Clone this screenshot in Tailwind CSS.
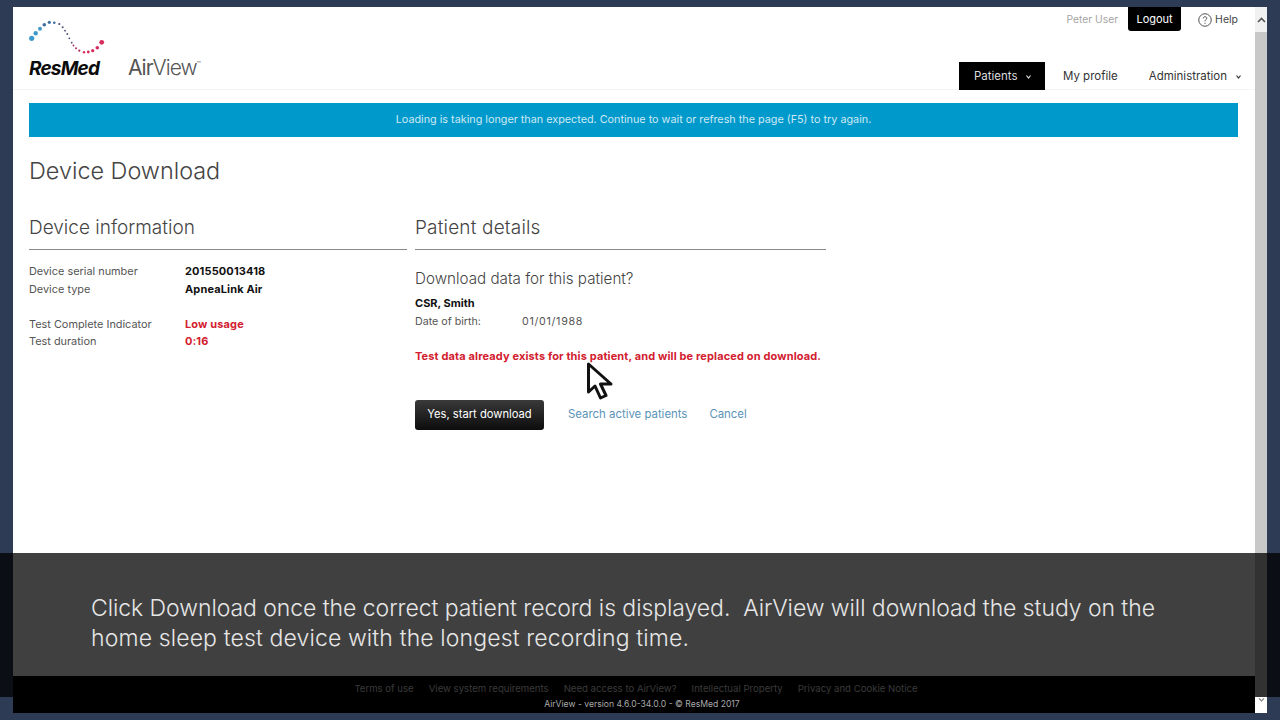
<!DOCTYPE html>
<html lang="en">
<head>
    <meta charset="UTF-8">
    <title>AirView - Device Download</title>
    <script src="https://cdn.jsdelivr.net/npm/@tailwindcss/browser@4"></script>
</head>
<body class="relative w-[1280px] h-[720px] overflow-hidden bg-[#2d3b55] font-['Inter','Liberation_Sans',sans-serif]">
    <!-- Browser window -->
    <div class="ml-[13px] mt-[7px] w-[1254px] h-[706px] flex bg-white">
        <div class="w-[1242px] flex flex-col">
            <!-- Header -->
            <header class="h-[83px] flex justify-between border-b border-[#f4f4f4] pl-[16px] pr-[17px] shrink-0">
                <div class="flex items-start gap-[23px] pt-[11px]">
                    <div class="w-[76px] flex flex-col">
                        <svg width="76" height="42" viewBox="0 0 76 42">
                            <g fill="#3f9ac9">
                                <circle cx="2.7" cy="20.3" r="2.6"/><circle cx="6.7" cy="15.3" r="2.2"/><circle cx="11" cy="10.7" r="2"/>
                            </g>
                            <g fill="#3f6f9f">
                                <circle cx="15.3" cy="6.8" r="1.8"/><circle cx="20.3" cy="4.3" r="1.6"/><circle cx="25.3" cy="4.7" r="1.3"/>
                            </g>
                            <g fill="#4a4f78">
                                <circle cx="30.3" cy="6" r="1.1"/><circle cx="33.7" cy="9.3" r="1"/><circle cx="36" cy="12.7" r="0.9"/><circle cx="38.3" cy="16" r="0.9"/><circle cx="40.3" cy="20.3" r="0.9"/><circle cx="42.7" cy="24.7" r="0.9"/>
                            </g>
                            <g fill="#b02c60">
                                <circle cx="44.5" cy="27.5" r="0.9"/><circle cx="47" cy="30.2" r="1"/><circle cx="50.3" cy="32.7" r="1.1"/>
                            </g>
                            <g fill="#d82c5c">
                                <circle cx="55" cy="34.3" r="1.2"/><circle cx="59.3" cy="34" r="1.4"/><circle cx="63.7" cy="32.7" r="1.6"/><circle cx="68.3" cy="29.7" r="1.8"/><circle cx="72.7" cy="24.3" r="2.4"/>
                            </g>
                        </svg>
                        <span class="-mt-[1px] text-[19px] leading-[20px] font-bold italic tracking-[-0.8px] text-[#0c0c0c] whitespace-nowrap">ResMed</span>
                    </div>
                    <span class="mt-[38px] text-[21px] leading-[24px] tracking-[-1px] text-[#555] font-light whitespace-nowrap"><span class="font-normal">Air</span>View<span class="relative -top-[8px] text-[7px] tracking-normal">™</span></span>
                </div>
                <div class="flex flex-col items-end justify-between">
                    <div class="flex items-start text-[11px] leading-[24px]">
                        <span class="text-[#a5a5a5] text-[10.3px] mr-[10px]">Peter User</span>
                        <span class="w-[53px] h-[24px] bg-black text-white text-center rounded-b-[3px]">Logout</span>
                        <span class="ml-[17px] pt-[1px] flex items-center gap-[3px] text-[#444] text-[10.5px]">
                            <svg width="14" height="14" viewBox="0 0 15 15" fill="none" stroke="#444"><circle cx="7.5" cy="7.5" r="6.7"/><path d="M5.6 5.8 C5.6 3.4 9.4 3.4 9.4 5.6 C9.4 7 7.5 7 7.5 8.9 M7.5 10.4 V11.6"/></svg>
                            Help
                        </span>
                    </div>
                    <nav class="flex items-center text-[11.5px] text-[#333] h-[28px] -mb-px -mr-[3px]">
                        <span class="w-[86px] h-[28px] pt-[1px] bg-black text-[#ddd] flex items-center pl-[15px]">Patients
                            <svg class="ml-[8px]" width="5" height="4" viewBox="0 0 5 4" fill="none" stroke="#ddd" stroke-width="1.2"><path d="M0.5 0.5 L2.5 3 L4.5 0.5"/></svg>
                        </span>
                        <span class="ml-[18px] pt-[1px]">My profile</span>
                        <span class="ml-[31px] pt-[1px] flex items-center">Administration
                            <svg class="ml-[9px]" width="5" height="4" viewBox="0 0 5 4" fill="none" stroke="#333" stroke-width="1.2"><path d="M0.5 0.5 L2.5 3 L4.5 0.5"/></svg>
                        </span>
                    </nav>
                </div>
            </header>

            <main class="flex-1 pl-[16px] pr-[17px] pt-[13px]">
                <div class="h-[34px] pt-[1px] bg-[#0099cc] text-[#cfe9f4] text-[10.8px] flex items-center justify-center">Loading is taking longer than expected. Continue to wait or refresh the page (F5) to try again.</div>
                <h1 class="mt-[18px] text-[23.4px] leading-[32px] font-light text-[#444]">Device Download</h1>

                <div class="mt-[27px] flex">
                    <!-- Device information -->
                    <section class="w-[378px]">
                        <h2 class="h-[36px] text-[19px] leading-[28px] font-light text-[#444] border-b border-[#888]">Device information</h2>
                        <div class="mt-[13px] grid grid-cols-[156px_1fr] text-[10.9px] leading-[17.5px] text-[#555]">
                            <span>Device serial number</span><b class="text-[11px] font-bold tracking-[0.13px] text-[#111]">201550013418</b>
                            <span>Device type</span><b class="text-[11px] font-bold tracking-[0.13px] text-[#111]">ApneaLink Air</b>
                            <span class="mt-[17.5px]">Test Complete Indicator</span><b class="mt-[17.5px] text-[11px] font-bold tracking-[0.13px] text-[#d2202f]">Low usage</b>
                            <span>Test duration</span><b class="text-[11px] font-bold tracking-[0.13px] text-[#d2202f]">0:16</b>
                        </div>
                    </section>
                    <!-- Patient details -->
                    <section class="ml-[8px] w-[411px]">
                        <h2 class="h-[36px] text-[19px] leading-[28px] tracking-[0.17px] font-light text-[#444] border-b border-[#888]">Patient details</h2>
                        <p class="mt-[19px] text-[15.2px] leading-[20px] font-light text-[#444]">Download data for this patient?</p>
                        <p class="mt-[6px] text-[11px] leading-[17.5px] font-bold text-[#111]">CSR, Smith</p>
                        <p class="text-[10.7px] leading-[17.5px] text-[#555] flex"><span class="w-[107px]">Date of birth:</span><span class="tracking-[0.7px]">01/01/1988</span></p>
                        <p class="mt-[18px] text-[11px] leading-[17.5px] font-bold tracking-[0.13px] text-[#d2202f] whitespace-nowrap">Test data already exists for this patient, and will be replaced on download.</p>
                        <div class="mt-[34px] flex items-center text-[11.4px]">
                            <button class="w-[129px] h-[30px] rounded-[3px] text-[11.2px] bg-gradient-to-b from-[#3a3a3a] to-[#0d0d0d] text-white">Yes, start download</button>
                            <a class="ml-[24px] text-[#5b93b8]">Search active patients</a>
                            <a class="ml-[22px] text-[#5b93b8]">Cancel</a>
                        </div>
                    </section>
                </div>
            </main>

            <!-- Footer -->
            <footer class="h-[37px] shrink-0 bg-black flex flex-col items-center pt-[6px] pl-[4px]">
                <div class="flex gap-[15px] text-[9.6px] text-[#ddd] leading-[13px]">
                    <span>Terms of use</span><span>View system requirements</span><span>Need access to AirView?</span><span>Intellectual Property</span><span>Privacy and Cookie Notice</span>
                </div>
                <div class="ml-[12px] mt-[2px] text-[8.6px] text-[#aaa] leading-[14px]">AirView - version 4.6.0-34.0.0 - © ResMed 2017</div>
            </footer>
        </div>
        <!-- Scrollbar -->
        <div class="w-[12px] flex flex-col bg-[#f1f1f1]">
            <div class="h-[25px] flex items-center justify-center"><svg width="9" height="6" viewBox="0 0 9 6" fill="none" stroke="#555" stroke-width="1.6"><path d="M1 5 L4.5 1.5 L8 5"/></svg></div>
            <div class="flex-1 bg-[#c8c8c8]"></div>
            <div class="h-[16px] bg-white flex justify-center pt-[1px]"><svg width="7" height="4" viewBox="0 0 7 4" fill="none" stroke="#888" stroke-width="1.2"><path d="M1 0.5 L3.5 3 L6 0.5"/></svg></div>
        </div>
    </div>

    <!-- Mouse cursor -->
    <svg class="absolute left-[586px] top-[362px]" width="28" height="38" viewBox="0 0 28 38">
        <path d="M2.5 2 V30 L9 24 L14.5 36 L20 33.5 L14.5 22 L25 22 Z" fill="#fff" stroke="#111" stroke-width="3" stroke-linejoin="round"/>
    </svg>

    <!-- Caption overlay -->
    <div class="absolute left-0 top-[553px] w-[1280px] h-[144px] bg-black/75 pl-[91px] pt-[40px] text-[23px] leading-[30px] font-light text-[#e6e6e6]">
        <p class="tracking-[-0.06px] whitespace-nowrap">Click Download once the correct patient record is displayed.&nbsp; AirView will download the study on the</p>
        <p class="tracking-[0.13px] whitespace-nowrap">home sleep test device with the longest recording time.</p>
    </div>
</body>
</html>
